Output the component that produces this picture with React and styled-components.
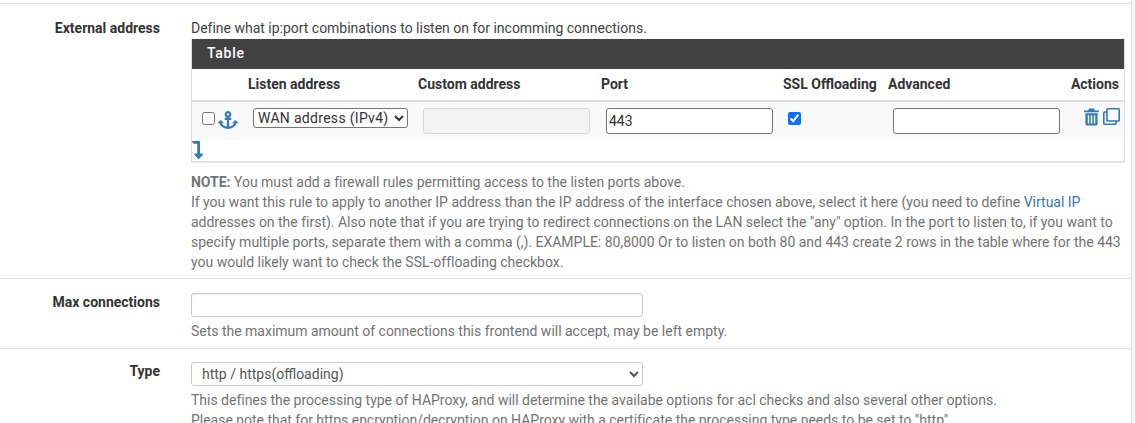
import styled, { createGlobalStyle } from "styled-components";
import { FaAnchor, FaLevelDownAlt, FaRegClone } from "react-icons/fa";

const GlobalStyle = createGlobalStyle`
  html, body {
    margin: 0;
    padding: 0;
    background: #f5f5f5;
    height: 423px;
    overflow: hidden;
    font-family: Roboto, "Liberation Sans", sans-serif;
    font-size: 14px;
    line-height: 20px;
    color: #333;
  }
`;

const Page = styled.div`
  padding-top: 3px;
  width: 1131px;
  height: 420px;
  background: #fff;
  border-right: 1px solid #ddd;
`;

const Row = styled.div`
  display: grid;
  grid-template-columns: 191px 934px;
  border-top: 1px solid #ddd;
  padding: ${(p) => p.$pad};
`;

const Label = styled.div`
  font-weight: 700;
  text-align: right;
  padding-right: 31px;
  margin-top: ${(p) => p.$top || "0"};
  color: #333;
`;

const Body = styled.div`
  min-width: 0;
`;

const Intro = styled.div`
  color: #424242;
  height: 21px;
  letter-spacing: -0.012px;
`;

const Panel = styled.div`
  border: 1px solid #ddd;
  border-top: 0;
  box-shadow: 0 1px 1px rgba(0, 0, 0, 0.08);
  height: 122px;
`;

const PanelHeading = styled.div`
  background: #424242;
  color: #fff;
  height: 30px;
  line-height: 29px;
  padding-left: 15px;
  font-weight: 500;
  letter-spacing: 0.7px;
`;

const Cols = styled.div`
  display: grid;
  grid-template-columns: 56px 170px 183px 182px 105px 177px 1fr;
`;

const HeadRow = styled(Cols)`
  height: 31px;
  line-height: 31px;
  border-bottom: 2px solid #ddd;
  font-weight: 700;
  white-space: nowrap;
`;

const HeadCell = styled.div`
  text-align: ${(p) => (p.$right ? "right" : "left")};
  padding-right: ${(p) => (p.$right ? "5px" : "0")};
`;

const DataRow = styled(Cols)`
  background: #f9f9f9;
  height: 38px;
  padding-top: 6px;
  box-sizing: border-box;
`;

const Cell = styled.div`
  padding-left: 5px;
  display: flex;
  align-items: flex-start;
`;

const MarkCell = styled.div`
  display: flex;
  align-items: flex-start;
  padding: 4px 0 0 10px;
  color: #337ab7;
`;

const ListenSelect = styled.select`
  width: 155px;
  height: 20px;
  box-sizing: border-box;
  font-family: Roboto, sans-serif;
  font-size: 14px;
  letter-spacing: 0.3px;
  color: #333;
  background: #fff;
  border: 1px solid #767676;
  border-radius: 3px;
  padding: 0;
`;

const TextInput = styled.input`
  width: 167px;
  height: 26px;
  box-sizing: border-box;
  font-family: Roboto, sans-serif;
  font-size: 14px;
  color: #333;
  background: ${(p) => (p.disabled ? "#f3f3f3" : "#fff")};
  border: 1px solid ${(p) => (p.disabled ? "#d8d8d8" : "#767676")};
  border-radius: 3px;
  padding: 1px 2px;
`;

const Check = styled.input.attrs({ type: "checkbox" })`
  width: 13px;
  height: 13px;
  margin: ${(p) => p.$m || "0"};
  accent-color: #0d6efd;
`;

const AnchorIcon = styled(FaAnchor)`
  width: 20px;
  height: 18px;
  margin: -1px 0 0 3px;
  color: #337ab7;
`;

const Actions = styled.div`
  display: flex;
  justify-content: flex-end;
  gap: 4px;
  padding-right: 4px;
  color: #337ab7;
`;

const TrashIcon = styled.svg`
  width: 15px;
  height: 18px;
  margin-top: 0;
  fill: #337ab7;
`;

const CloneIcon = styled(FaRegClone)`
  width: 17px;
  height: 17px;
`;

const MoveIcon = styled(FaLevelDownAlt)`
  display: block;
  width: 13px;
  height: 18px;
  margin: 1px 0 0 -1px;
  color: #337ab7;
`;

const Help = styled.div`
  color: #737373;
  letter-spacing: -0.012px;
  margin-top: ${(p) => p.$top || "10px"};
`;

const Link = styled.a`
  color: #337ab7;
  text-decoration: none;
`;

const WideInput = styled.input`
  display: block;
  width: 452px;
  height: 24px;
  box-sizing: border-box;
  border: 1px solid #ccc;
  border-radius: 3px;
  box-shadow: inset 0 1px 1px rgba(0, 0, 0, 0.075);
`;

const WideSelect = styled.select`
  display: block;
  width: 452px;
  height: 24px;
  box-sizing: border-box;
  font-family: Roboto, sans-serif;
  font-size: 14px;
  color: #555;
  background: #fff;
  border: 1px solid #ccc;
  border-radius: 3px;
  padding: 0 6px;
`;

function Trash() {
  return (
    <TrashIcon viewBox="0 0 16 18">
      <path d="M5.5 0h5l1 2H16v2H0V2h4.5z" />
      <path d="M1.5 5h13v11.5a1.5 1.5 0 0 1-1.5 1.5H3a1.5 1.5 0 0 1-1.5-1.5zM4 7v9h1.5V7zm3.2 0v9h1.6V7zm3.3 0v9H12V7z" fillRule="evenodd" />
    </TrashIcon>
  );
}

export default function App() {
  return (
    <Page>
      <GlobalStyle />
      <Row $pad="14px 0 6px">
        <Label>External address</Label>
        <Body>
          <Intro>Define what ip:port combinations to listen on for incomming connections.</Intro>
          <Panel>
            <PanelHeading>Table</PanelHeading>
            <HeadRow>
              <HeadCell />
              <HeadCell>Listen address</HeadCell>
              <HeadCell>Custom address</HeadCell>
              <HeadCell>Port</HeadCell>
              <HeadCell>SSL Offloading</HeadCell>
              <HeadCell>Advanced</HeadCell>
              <HeadCell $right>Actions</HeadCell>
            </HeadRow>
            <DataRow>
              <MarkCell>
                <Check />
                <AnchorIcon />
              </MarkCell>
              <Cell>
                <ListenSelect defaultValue="wan">
                  <option value="wan">WAN address (IPv4)</option>
                </ListenSelect>
              </Cell>
              <Cell>
                <TextInput disabled />
              </Cell>
              <Cell>
                <TextInput defaultValue="443" />
              </Cell>
              <Cell>
                <Check defaultChecked $m="4px 0 0" />
              </Cell>
              <Cell>
                <TextInput />
              </Cell>
              <Actions>
                <Trash />
                <CloneIcon />
              </Actions>
            </DataRow>
            <MoveIcon />
          </Panel>
          <Help>
            <strong>NOTE:</strong> You must add a firewall rules permitting access to the listen ports above.
            <br />
            If you want this rule to apply to another IP address than the IP address of the interface chosen above,
            select it here (you need to define <Link>Virtual IP</Link> addresses on the first). Also note that if you
            are trying to redirect connections on the LAN select the "any" option. In the port to listen to, if you want
            to specify multiple ports, separate them with a comma (,). EXAMPLE: 80,8000 Or to listen on both 80 and 443
            create 2 rows in the table where for the 443 you would likely want to check the SSL-offloading checkbox.
          </Help>
        </Body>
      </Row>
      <Row $pad="14px 0 7px">
        <Label $top="-1px">Max connections</Label>
        <Body>
          <WideInput />
          <Help $top="4px">Sets the maximum amount of connections this frontend will accept, may be left empty.</Help>
        </Body>
      </Row>
      <Row $pad="13px 0 0">
        <Label $top="-1px">Type</Label>
        <Body>
          <WideSelect defaultValue="http">
            <option value="http">http / https(offloading)</option>
          </WideSelect>
          <Help $top="4px">
            This defines the processing type of HAProxy, and will determine the availabe options for acl checks and also
            several other options.
            <br />
            Please note that for https encryption/decryption on HAProxy with a certificate the processing type needs to
            be set to "http".
          </Help>
        </Body>
      </Row>
    </Page>
  );
}
